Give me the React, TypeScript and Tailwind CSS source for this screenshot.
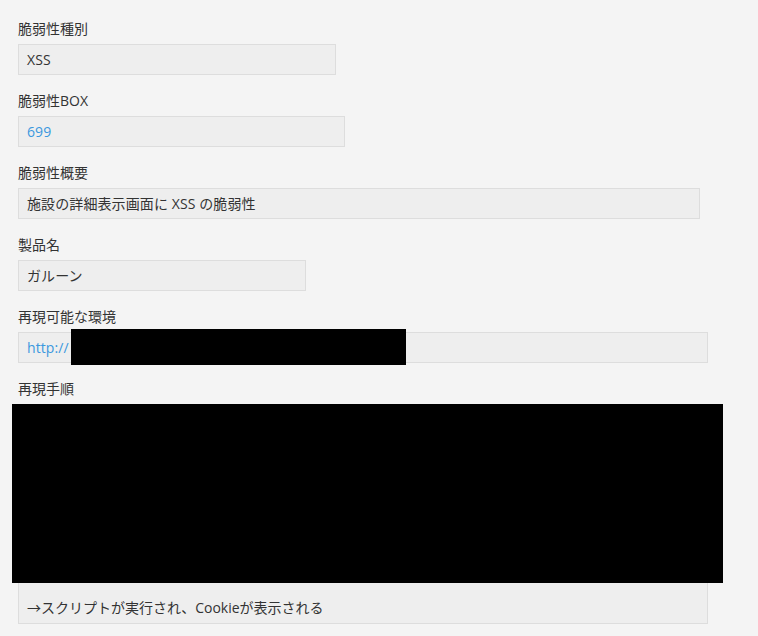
import React from "react";

const font = { fontFamily: '"Open Sans", "Noto Sans CJK JP", sans-serif' };

function Field({
  label,
  value,
  width,
  blue,
  children,
}: {
  label: string;
  value?: string;
  width: string;
  blue?: boolean;
  children?: React.ReactNode;
}) {
  return (
    <div className="flex flex-col">
      <div className="h-[20px] leading-[20px] text-[14px] text-[#333333] mb-[5px]">{label}</div>
      <div
        className={`relative h-[31px] border border-[#dddddd] bg-[#eeeeee] px-[8px] flex items-center text-[14px] tracking-[0.1px] ${
          blue ? "text-[#3b98de]" : "text-[#333333]"
        } ${width}`}
      >
        {value}
        {children}
      </div>
    </div>
  );
}

export default function App() {
  return (
    <div className="min-h-[636px] w-full bg-[#f4f4f4] overflow-hidden" style={font}>
      <div className="pl-[18px] pt-[19px] flex flex-col gap-[16px]">
        <Field label="脆弱性種別" value="XSS" width="w-[318px]" />
        <Field label="脆弱性BOX" value="699" width="w-[327px]" blue />
        <Field label="脆弱性概要" value="施設の詳細表示画面に XSS の脆弱性" width="w-[682px]" />
        <Field label="製品名" value="ガルーン" width="w-[288px]" />
        <Field label="再現可能な環境" value="http://" width="w-[690px]" blue>
          <div className="absolute left-[52px] top-[-4px] w-[335px] h-[36px] bg-black" />
        </Field>
        <div className="flex flex-col">
          <div className="h-[20px] leading-[20px] text-[14px] text-[#333333] mb-[5px]">再現手順</div>
          <div className="relative w-[690px] h-[220px] border border-[#dddddd] bg-[#eeeeee] px-[8px] pb-[5px] flex flex-col justify-end text-[14px] text-[#333333]">
            <div className="leading-[20px]">→スクリプトが実行され、Cookieが表示される</div>
            <div className="absolute left-[-7px] top-[-1px] w-[711px] h-[179px] bg-black" />
          </div>
        </div>
      </div>
    </div>
  );
}
